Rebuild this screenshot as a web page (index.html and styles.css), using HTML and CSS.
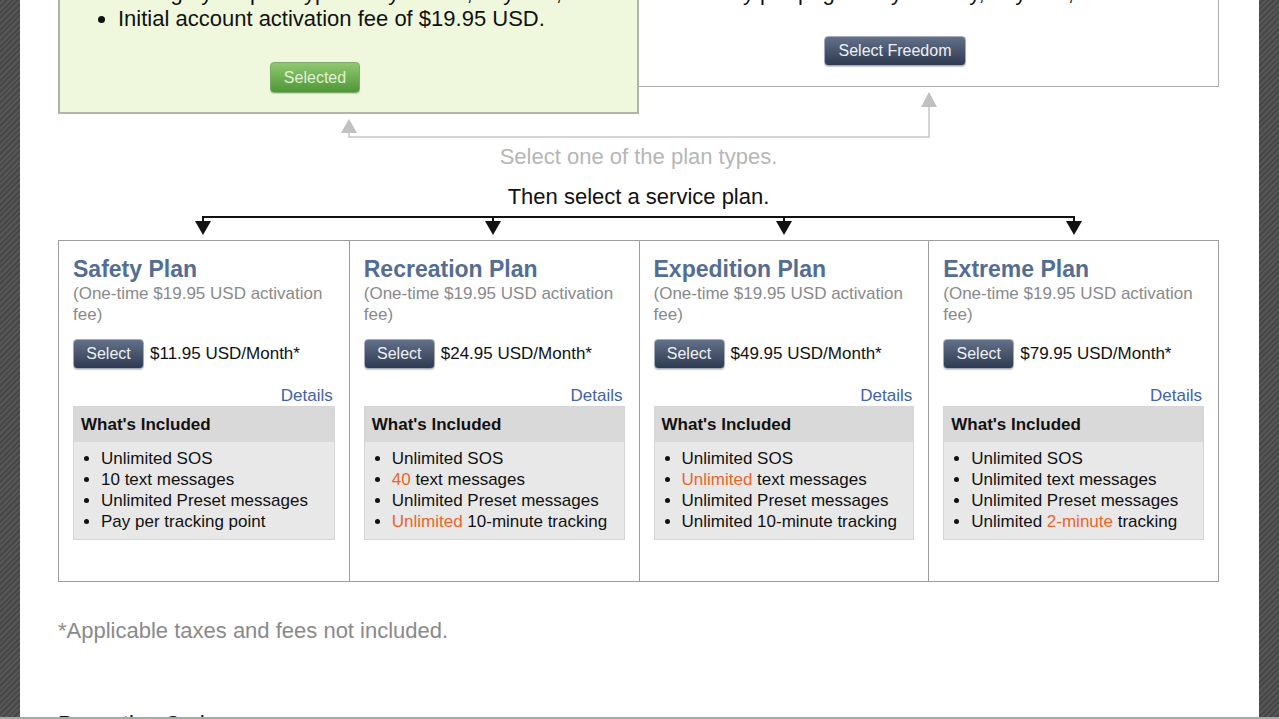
FILE: index.html
```html
<!DOCTYPE html>
<html lang="en">
<head>
    <meta charset="UTF-8">
    <meta name="viewport" content="width=device-width, initial-scale=1.0">
    <title>Choose a Service Plan</title>
    <link rel="stylesheet" href="styles.css">
</head>
<body>
<div class="page">
    <div class="plan-types">
        <div class="type-box type-selected">
            <ul class="type-list">
                <li>Change your plan type every month, anytime,</li>
                <li>Initial account activation fee of $19.95 USD.</li>
            </ul>
            <button class="btn btn-green">Selected</button>
        </div>
        <div class="type-box type-other">
            <p class="type-note">Pay per page or by the day, anytime,</p>
            <button class="btn btn-dark">Select Freedom</button>
        </div>
    </div>

    <svg class="connector connector-up" width="1161" height="53" viewBox="0 0 1161 53">
        <polyline points="291,46 291,50 871,50 871,20" fill="none" stroke="#c6c6c6" stroke-width="1.5"/>
        <polygon points="291,32 283,46 299,46" fill="#c0c0c0"/>
        <polygon points="871,5 863,20 879,20" fill="#c0c0c0"/>
    </svg>

    <p class="hint">Select one of the plan types.</p>
    <p class="lead">Then select a service plan.</p>

    <svg class="connector connector-down" width="1161" height="30" viewBox="0 0 1161 30">
        <polyline points="145,12 145,7 1016,7 1016,12" fill="none" stroke="#111" stroke-width="2"/>
        <line x1="435" y1="7" x2="435" y2="12" stroke="#111" stroke-width="2"/>
        <line x1="726" y1="7" x2="726" y2="12" stroke="#111" stroke-width="2"/>
        <polygon points="137,11 153,11 145,25" fill="#111"/>
        <polygon points="427,11 443,11 435,25" fill="#111"/>
        <polygon points="718,11 734,11 726,25" fill="#111"/>
        <polygon points="1008,11 1024,11 1016,25" fill="#111"/>
    </svg>

    <div class="plans">
        <div class="plan">
            <h3 class="plan-title">Safety Plan</h3>
            <p class="plan-fee">(One-time $19.95 USD activation fee)</p>
            <div class="plan-price">
                <button class="btn btn-dark btn-small">Select</button>
                <span>$11.95 USD/Month*</span>
            </div>
            <div class="plan-details"><a href="#">Details</a></div>
            <div class="included">
                <div class="included-head">What's Included</div>
                <ul class="included-list">
                    <li>Unlimited SOS</li>
                    <li>10 text messages</li>
                    <li>Unlimited Preset messages</li>
                    <li>Pay per tracking point</li>
                </ul>
            </div>
        </div>
        <div class="plan">
            <h3 class="plan-title">Recreation Plan</h3>
            <p class="plan-fee">(One-time $19.95 USD activation fee)</p>
            <div class="plan-price">
                <button class="btn btn-dark btn-small">Select</button>
                <span>$24.95 USD/Month*</span>
            </div>
            <div class="plan-details"><a href="#">Details</a></div>
            <div class="included">
                <div class="included-head">What's Included</div>
                <ul class="included-list">
                    <li>Unlimited SOS</li>
                    <li><span class="hl">40</span> text messages</li>
                    <li>Unlimited Preset messages</li>
                    <li><span class="hl">Unlimited</span> 10-minute tracking</li>
                </ul>
            </div>
        </div>
        <div class="plan">
            <h3 class="plan-title">Expedition Plan</h3>
            <p class="plan-fee">(One-time $19.95 USD activation fee)</p>
            <div class="plan-price">
                <button class="btn btn-dark btn-small">Select</button>
                <span>$49.95 USD/Month*</span>
            </div>
            <div class="plan-details"><a href="#">Details</a></div>
            <div class="included">
                <div class="included-head">What's Included</div>
                <ul class="included-list">
                    <li>Unlimited SOS</li>
                    <li><span class="hl">Unlimited</span> text messages</li>
                    <li>Unlimited Preset messages</li>
                    <li>Unlimited 10-minute tracking</li>
                </ul>
            </div>
        </div>
        <div class="plan">
            <h3 class="plan-title">Extreme Plan</h3>
            <p class="plan-fee">(One-time $19.95 USD activation fee)</p>
            <div class="plan-price">
                <button class="btn btn-dark btn-small">Select</button>
                <span>$79.95 USD/Month*</span>
            </div>
            <div class="plan-details"><a href="#">Details</a></div>
            <div class="included">
                <div class="included-head">What's Included</div>
                <ul class="included-list">
                    <li>Unlimited SOS</li>
                    <li>Unlimited text messages</li>
                    <li>Unlimited Preset messages</li>
                    <li>Unlimited <span class="hl">2-minute</span> tracking</li>
                </ul>
            </div>
        </div>
    </div>

    <p class="footnote">*Applicable taxes and fees not included.</p>
    <h3 class="promo-title">Promotion Code</h3>
</div>
<div class="bottom-edge"></div>
</body>
</html>
```
FILE: styles.css
```css
body {
    margin: 0;
    padding: 0 20px;
    font-family: "Liberation Sans", Arial, Helvetica, sans-serif;
    color: #111;
    background-color: #4b4b4b;
    background-image: repeating-linear-gradient(135deg, #474747 0, #474747 2px, #565656 2px, #565656 4px);
}
.page {
    display: flow-root;
    background-color: #fff;
    min-height: 100vh;
    padding: 0 40px 0 38px;
}
.plan-types {
    display: flex;
    align-items: flex-start;
    margin-top: -40px;
}
.type-box {
    box-sizing: border-box;
    text-align: center;
}
.type-selected {
    width: 581px;
    background-color: #eff8dc;
    border: 2px solid #b2b5a6;
    padding: 18px 67px 19px 0;
}
.type-other {
    flex: 1;
    border: 1px solid #ababab;
    border-left: none;
    padding: 19px 67px 20px 0;
}
.type-list {
    text-align: left;
    margin: 0 -60px 30px 0;
    padding-left: 58px;
    font-size: 22px;
    line-height: 26px;
}
.type-note {
    margin: 0 0 30px;
    font-size: 22px;
    line-height: 26px;
    white-space: nowrap;
}
.btn {
    display: block;
    margin: 0 auto;
    box-sizing: border-box;
    font-family: "Liberation Sans", Arial, Helvetica, sans-serif;
    font-size: 16px;
    border-radius: 4px;
    cursor: pointer;
}
.btn-green {
    height: 31px;
    padding: 0 13px;
    color: #e3f0d6;
    background: linear-gradient(#8fc870, #4f9736);
    border: 1px solid #7ea86c;
    box-shadow: 0 1px 1px rgba(0, 0, 0, 0.15);
}
.btn-dark {
    height: 30px;
    padding: 0 14px;
    color: #eef1f6;
    background: linear-gradient(#627089, #2e3a50);
    border: 1px solid #a4abb6;
    box-shadow: 0 1px 1px rgba(0, 0, 0, 0.2);
}
.btn-small {
    margin: 0;
    width: 71px;
    padding: 0;
}
.connector {
    display: block;
}
.connector-up {
    margin-top: -27px;
}
.hint {
    margin: 4px 0 0;
    text-align: center;
    font-size: 22px;
    line-height: 26px;
    color: #b6b6b6;
}
.lead {
    margin: 14px 0 0;
    text-align: center;
    font-size: 22px;
    line-height: 26px;
}
.plans {
    display: grid;
    grid-template-columns: repeat(4, 1fr);
    border: 1px solid #9c9c9c;
}
.plan {
    padding: 15px 14px 41px;
}
.plan + .plan {
    border-left: 1px solid #9c9c9c;
}
.plan-title {
    margin: 0;
    font-size: 23px;
    line-height: 27px;
    color: #536d94;
}
.plan-fee {
    margin: 0;
    font-size: 17px;
    line-height: 21px;
    color: #8a8a8a;
}
.plan-price {
    display: flex;
    align-items: center;
    gap: 6px;
    margin-top: 14px;
    font-size: 17px;
}
.plan-details {
    margin-top: 16px;
    text-align: right;
    font-size: 17px;
    line-height: 21px;
    padding-right: 2px;
}
.plan-details a {
    color: #4262a8;
    text-decoration: none;
}
.included {
    border: 1px solid #d5d5d5;
}
.included-head {
    background-color: #d9d9d9;
    padding: 7px 7px;
    font-weight: bold;
    font-size: 17px;
    line-height: 21px;
}
.included-list {
    margin: 0;
    padding: 6px 0 7px 27px;
    background-color: #e8e8e8;
    font-size: 17px;
    line-height: 21px;
}
.hl {
    color: #e8652c;
}
.footnote {
    margin: 36px 0 0;
    font-size: 22px;
    line-height: 26px;
    color: #8a8a8a;
}
.promo-title {
    margin: 67px 0 0;
    font-size: 22px;
    line-height: 26px;
    font-weight: normal;
}
.bottom-edge {
    position: fixed;
    left: 0;
    right: 0;
    bottom: 0;
    height: 2px;
    background-color: #a8a8a8;
}
```
